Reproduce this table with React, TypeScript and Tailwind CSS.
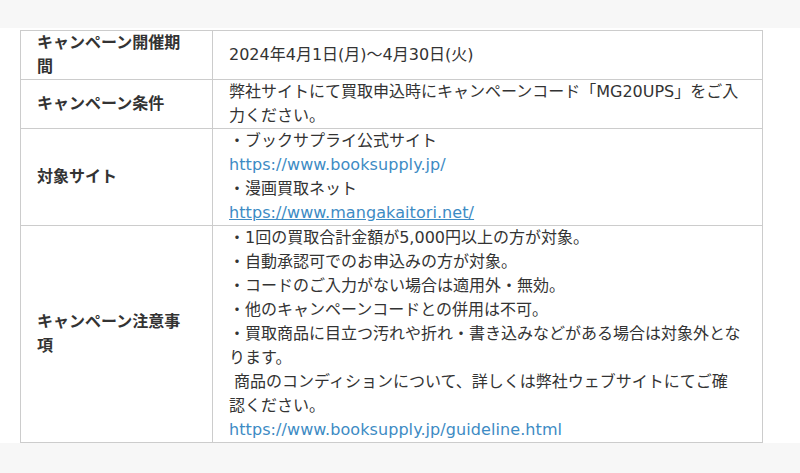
import React from "react";

type Row = {
  label: string;
  content: React.ReactNode;
};

const linkClass = "text-[#3d8bc4] tracking-[0.08px]";

const rows: Row[] = [
  {
    label: "キャンペーン開催期間",
    content: <>2024年4月1日(月)〜4月30日(火)</>,
  },
  {
    label: "キャンペーン条件",
    content: (
      <>弊社サイトにて買取申込時にキャンペーンコード「MG20UPS」をご入力ください。</>
    ),
  },
  {
    label: "対象サイト",
    content: (
      <>
        ・ブックサプライ公式サイト
        <br />
        <a href="#" className={linkClass}>
          https://www.booksupply.jp/
        </a>
        <br />
        ・漫画買取ネット
        <br />
        <a href="#" className={`${linkClass} underline`}>
          https://www.mangakaitori.net/
        </a>
      </>
    ),
  },
  {
    label: "キャンペーン注意事項",
    content: (
      <>
        ・1回の買取合計金額が5,000円以上の方が対象。
        <br />
        ・自動承認可でのお申込みの方が対象。
        <br />
        ・コードのご入力がない場合は適用外・無効。
        <br />
        ・他のキャンペーンコードとの併用は不可。
        <br />
        ・買取商品に目立つ汚れや折れ・書き込みなどがある場合は対象外となります。
        <br />
        {"\u00a0"}商品のコンディションについて、詳しくは弊社ウェブサイトにてご確
        <br />
        認ください。
        <br />
        <a href="#" className={linkClass}>
          https://www.booksupply.jp/guideline.html
        </a>
      </>
    ),
  },
];

export default function App() {
  return (
    <div className="min-h-[473px] bg-[#f7f7f7] font-['DejaVu_Sans','Noto_Sans_CJK_JP',sans-serif] text-[16px] leading-6 text-[#333]">
      <div className="h-[28px]" />
      <section className="bg-white pt-[2px] pl-5">
        <table className="w-[743px] table-fixed border-collapse">
          <colgroup>
            <col className="w-[192px]" />
            <col />
          </colgroup>
          <tbody>
            {rows.map((row) => (
              <tr key={row.label}>
                <th className="border border-[#cccccc] px-4 py-0 text-left align-middle font-bold">
                  {row.label}
                </th>
                <td className="border border-[#cccccc] px-4 py-0 align-middle">
                  {row.content}
                </td>
              </tr>
            ))}
          </tbody>
        </table>
      </section>
    </div>
  );
}
